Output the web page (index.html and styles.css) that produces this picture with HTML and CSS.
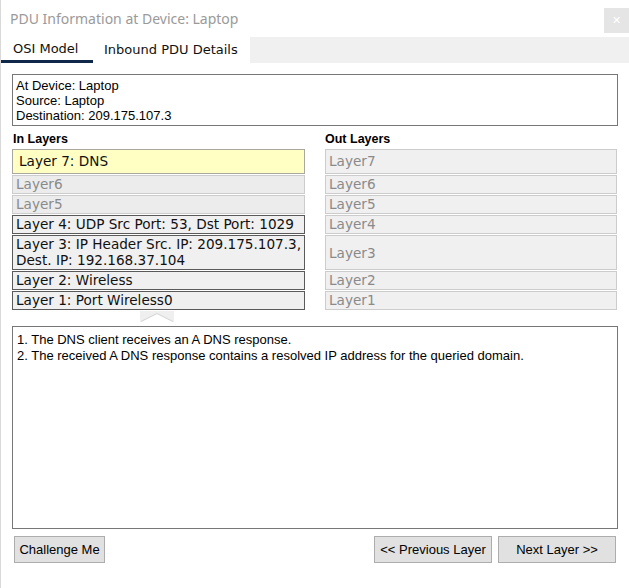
FILE: index.html
```html
<!DOCTYPE html>
<html>
<head>
<meta charset="utf-8">
<link rel="stylesheet" href="styles.css">
</head>
<body>
<div class="window">
  <div class="titlebar">
    <div class="title">PDU Information at Device: Laptop</div>
    <div class="close">✕</div>
  </div>
  <div class="tabs">
    <div class="tab active">OSI Model</div>
    <div class="tab">Inbound PDU Details</div>
    <div class="tabfill"></div>
  </div>
  <div class="content">
    <div class="info">
      <div>At Device: Laptop</div>
      <div>Source: Laptop</div>
      <div>Destination: 209.175.107.3</div>
    </div>
    <div class="columns">
      <div class="col">
        <div class="colhead">In Layers</div>
        <div class="layer current">Layer 7: DNS</div>
        <div class="layer off">Layer6</div>
        <div class="layer off">Layer5</div>
        <div class="layer on">Layer 4: UDP Src Port: 53, Dst Port: 1029</div>
        <div class="layer on">Layer 3: IP Header Src. IP: 209.175.107.3,<br>Dest. IP: 192.168.37.104</div>
        <div class="layer on">Layer 2: Wireless</div>
        <div class="layer on">Layer 1: Port Wireless0</div>
        <div class="arrowrow">
          <svg width="34" height="11" viewBox="0 0 34 11">
            <rect x="0" y="0" width="34" height="11" fill="#efefef"/>
            <path d="M1 11 L17 3 L33 11 Z" fill="#ffffff"/>
            <path d="M1 10.5 L17 2.5 L33 10.5" fill="none" stroke="#d4d4d4" stroke-width="1"/>
          </svg>
        </div>
      </div>
      <div class="col">
        <div class="colhead">Out Layers</div>
        <div class="layer out tall">Layer7</div>
        <div class="layer out">Layer6</div>
        <div class="layer out">Layer5</div>
        <div class="layer out">Layer4</div>
        <div class="layer out double">Layer3</div>
        <div class="layer out">Layer2</div>
        <div class="layer out">Layer1</div>
      </div>
    </div>
    <div class="desc">
      <div>1. The DNS client receives an A DNS response.</div>
      <div>2. The received A DNS response contains a resolved IP address for the queried domain.</div>
    </div>
    <div class="buttons">
      <button class="btn challenge">Challenge Me</button>
      <div class="spacer"></div>
      <button class="btn prev">&lt;&lt; Previous Layer</button>
      <button class="btn next">Next Layer &gt;&gt;</button>
    </div>
  </div>
</div>
</body>
</html>
```
FILE: styles.css
```css
* { box-sizing: border-box; }
html, body { margin: 0; padding: 0; background: #fff; }
body { width: 629px; height: 588px; overflow: hidden; }
.window {
  width: 629px;
  height: 588px;
  border-left: 1px solid #d9d9d9;
  font-family: "Liberation Sans", Arial, sans-serif;
  font-size: 13px;
  color: #000;
}
.titlebar {
  height: 37px;
  display: flex;
  align-items: flex-start;
  justify-content: space-between;
}
.title {
  margin: 9px 0 0 9px;
  font-family: "Noto Sans", "Open Sans", sans-serif;
  font-size: 14px;
  color: #9a9a9a;
  line-height: 20px;
}
.close {
  width: 25px;
  height: 25px;
  margin: 8px 0 0 0;
  background: #e5e5e5;
  color: #fff;
  font-family: "DejaVu Sans", sans-serif;
  font-size: 11px;
  font-weight: bold;
  display: flex;
  align-items: center;
  justify-content: center;
}
.tabs {
  height: 26px;
  display: flex;
}
.tab {
  font-family: "DejaVu Sans", Verdana, sans-serif;
  font-size: 13px;
  line-height: 26px;
  padding: 0 11px;
  color: #111;
}
.tab.active {
  width: 92px;
  padding: 0 0 0 12px;
  border-bottom: 3px solid #10284a;
  line-height: 24px;
}
.tab + .tab { padding-left: 11px; width: 157px; }
.tabfill { flex: 1; background: #f0f0f0; }
.content {
  padding: 11px 11px 0 11px;
}
.info {
  height: 52px;
  border: 1px solid #777;
  padding: 3px 4px 0 3px;
  line-height: 15px;
}
.columns {
  display: flex;
  gap: 20px;
  margin-top: 5px;
}
.col {
  width: 293px;
  display: flex;
  flex-direction: column;
  gap: 1px;
}
.col + .col { width: 292px; }
.colhead {
  font-weight: bold;
  font-size: 12.5px;
  line-height: 16px;
  padding-left: 1px;
  margin-bottom: 1px;
}
.col + .col .colhead { padding-left: 0; }
.layer {
  font-family: "DejaVu Sans", Verdana, sans-serif;
  font-size: 13.6px;
  line-height: 16px;
  padding: 0 3px 1px 3px;
  border: 1px solid #ccc;
  background: #f0f0f0;
  color: #8a8a8a;
  white-space: nowrap;
}
.layer.current {
  height: 25px;
  padding: 3px 6px 4px 6px;
  background: #ffffc4;
  border-color: #a8a8a0;
  color: #111;
}
.layer.off { background: #ececec; }
.layer.on {
  border-color: #5a5a5a;
  color: #111;
}
.layer.out.tall {
  height: 25px;
  padding-top: 3px;
}
.layer.out.double {
  height: 35px;
  padding-top: 9px;
}
.arrowrow {
  display: flex;
  justify-content: center;
  height: 15px;
  padding-right: 3px;
}
.arrowrow svg { display: block; }
.desc {
  height: 203px;
  border: 1px solid #777;
  padding: 5px 4px 0 4px;
  line-height: 16px;
}
.buttons {
  display: flex;
  margin-top: 7px;
  padding-left: 2px;
  padding-right: 2px;
  gap: 6px;
}
.spacer { flex: 1; }
.btn {
  height: 27px;
  background: #e1e1e1;
  border: 1px solid #adadad;
  font-family: "Liberation Sans", Arial, sans-serif;
  font-size: 13px;
  color: #000;
  padding: 0;
  margin: 0;
}
.challenge { width: 91px; }
.prev { width: 118px; }
.next { width: 118px; }
```
